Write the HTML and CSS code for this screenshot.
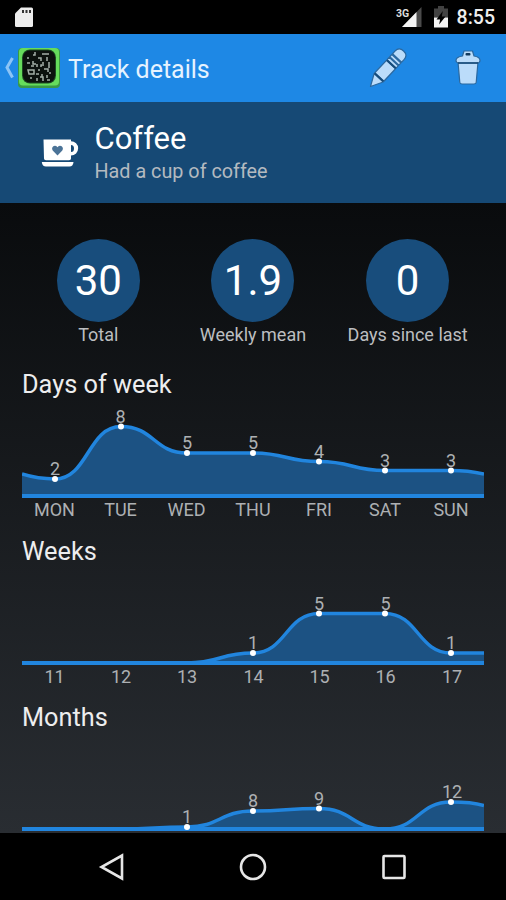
FILE: index.html
```html
<!DOCTYPE html>
<html lang="en">
<head>
  <meta charset="UTF-8" />
  <meta name="viewport" content="width=device-width, initial-scale=1" />
  <title>Track details</title>
  <link rel="stylesheet" href="styles.css">
</head>
<body>
  <div class="statusbar">
    <svg class="sdcard" width="20" height="22" viewBox="0 0 20 22">
      <path d="M7 1.500h10.500q1.500 0 1.500 1.500v16.500q0 1.500-1.500 1.500h-15q-1.500 0-1.500-1.500V7.500z" fill="#ececec"/>
      <path d="M9 4v3M12.500 4v3M16 4v3" stroke="#333" stroke-width="2"/>
    </svg>
    <svg class="signal" width="28" height="22" viewBox="0 0 28 22">
      <path d="M26.500 1v20H7z" fill="#4a4a4a"/>
      <path d="M21.500 6v15H7z" fill="#f4f4f4"/>
      <text class="network" x="1" y="10.500">3G</text>
    </svg>
    <svg class="battery" width="16" height="22" viewBox="0 0 16 22">
      <path d="M5 0h6v2.500h4V11.500H1V2.500h4z" fill="#424242"/>
      <path d="M1 11.500h14v10H1z" fill="#f4f4f4"/>
      <path d="M9.800 5L3.500 13.500h3.600l-1 5L12.500 10.500H8.800z" fill="#000"/>
    </svg>
    <span class="clock">8:55</span>
  </div>

  <div class="actionbar">
    <svg class="back" width="10" height="22" viewBox="0 0 10 22">
      <path d="M8.500 1L3 10.500 8.500 20.500" fill="none" stroke="#8cc4f6" stroke-width="3"/>
    </svg>
    <svg class="logo" width="42" height="42" viewBox="0 0 42 42">
      <rect x="0" y="1" width="42" height="40" rx="4" fill="#3a9a45"/>
      <rect x="1" y="1" width="40" height="37.500" rx="4" fill="#66dc5c"/>
      <rect x="4" y="2.500" width="34" height="34" rx="8" fill="#1c4a22"/>
      <rect x="5" y="3.500" width="32" height="32" rx="7" fill="#0c120e"/>
      <g fill="none" stroke="#a4b0a8" stroke-width="1.500">
        <path d="M17 5v3h-2M24 7h7M10 10v2M20 11h3v3M29 10v4M9 16h3M15 14v3h3M24 16h2M31 15v6"/>
        <path d="M13 19h3M19 17v3M23 20v-2h3M10 23h6v4h-5zM20 23h2M26 22h4v3M18 27h3"/>
        <path d="M24 27v3M29 28v3M19 31v3M22 30h3v4M12 31h2M29 33h3M32 25v2"/>
      </g>
    </svg>
    <h1 class="title">Track details</h1>
    <svg class="edit" width="40" height="40" viewBox="0 0 40 40">
      <g transform="translate(2.500 38.500) rotate(-47)" fill="#bbdcfa" stroke="#2b689f" stroke-width="1.200" stroke-linejoin="round">
        <path d="M0 0L12-6.200V6.200z"/>
        <path d="M13-6.200H30V6.200H13z"/>
        <path d="M31-6.200h3v12.400h-3zM35-6.200h3v12.400h-3z"/>
        <path d="M39-6.200h3.500q6 0 6 6.200t-6 6.200H39z"/>
        <path d="M12.500-6V6M30.500-6V6" stroke="#174b78" stroke-width="1.800"/>
      </g>
    </svg>
    <svg class="trash" width="28" height="38" viewBox="0 0 28 38">
      <g fill="#bbdcfa" stroke="#2b689f" stroke-width="1.200" stroke-linejoin="round">
        <path d="M4 13h20l-1.800 20.500q-.3 1.500-2.500 1.500H8.300q-2.200 0-2.500-1.500z"/>
        <path d="M8.500 7L10 2h8.500L20 7q6 1 6 4.500 0 2.500-3 2.500H5q-3 0-3-2.500Q2 8 8.500 7z"/>
      </g>
      <path d="M4 14h20" stroke="#174b78" stroke-width="1.600"/>
      <rect x="11.500" y="4" width="5" height="2.600" rx="1" fill="#123a5c"/>
    </svg>
  </div>

  <div class="track">
    <svg class="cup" width="38" height="30" viewBox="0 0 38 30">
      <path d="M2.500 1.500H30v1.700a6.500 6.500 0 0 1 0 14.300v3q0 1.700-2 1.700H5q-2 0-2-1.700z" fill="#fff"/>
      <path d="M30 7a3 3.500 0 0 1 0 7z" fill="#164975"/>
      <path d="M.8 24H32.500q-.5 4.500-4 4.500H5Q1.300 28.500.8 24z" fill="#fff"/>
      <path d="M16.500 17.500L11.700 12.500q-1.500-2.500.6-4.300 2.400-1.100 4.200 1.100 1.800-2.200 4.200-1.100 2.100 1.800.6 4.300z" fill="#4b7397"/>
    </svg>
    <div>
      <h2 class="name">Coffee</h2>
      <p class="description">Had a cup of coffee</p>
    </div>
  </div>

  <div class="content">
    <div class="stats">
      <div class="stat"><div class="circle">30</div><p>Total</p></div>
      <div class="stat"><div class="circle">1.9</div><p>Weekly mean</p></div>
      <div class="stat"><div class="circle">0</div><p>Days since last</p></div>
    </div>

    <div class="section">
      <h3>Days of week</h3>
      <svg class="chart" width="462" height="132" viewBox="0 0 462 132">
        <path class="area" d="M0 72Q16 77 33 77C66 77 66 24.500 99 24.500S132 51 165 51H231C264 51 264 59.500 297 59.500S330 68.500 363 68.500H429Q446 68.500 462 72V94H0z"/>
        <path class="line" d="M0 72Q16 77 33 77C66 77 66 24.500 99 24.500S132 51 165 51H231C264 51 264 59.500 297 59.500S330 68.500 363 68.500H429Q446 68.500 462 72"/>
        <path class="axis" d="M0 94H462"/>
        <g class="dots">
          <circle cx="33" cy="77" r="3"/><circle cx="99" cy="24.500" r="3"/><circle cx="165" cy="51" r="3"/>
          <circle cx="231" cy="51" r="3"/><circle cx="297" cy="59.500" r="3"/><circle cx="363" cy="68.500" r="3"/>
          <circle cx="429" cy="68.500" r="3"/>
        </g>
        <g class="labels">
          <text x="33" y="73">2</text><text x="98.500" y="20.500">8</text><text x="165" y="47">5</text>
          <text x="231" y="47">5</text><text x="297" y="55.500">4</text><text x="363" y="64.500">3</text>
          <text x="429" y="64.500">3</text>
          <text x="32.500" y="114">MON</text><text x="98.500" y="114">TUE</text><text x="164.500" y="114">WED</text>
          <text x="231" y="114">THU</text><text x="297" y="114">FRI</text><text x="363" y="114">SAT</text>
          <text x="429" y="114">SUN</text>
        </g>
      </svg>
    </div>

    <div class="section">
      <h3>Weeks</h3>
      <svg class="chart" width="462" height="132" viewBox="0 0 462 132">
        <path class="area" d="M0 94H165C198 94 198 84 231 84S264 44.500 297 44.500H363C396 44.500 396 84 429 84H462V94z"/>
        <path class="line" d="M0 94H165C198 94 198 84 231 84S264 44.500 297 44.500H363C396 44.500 396 84 429 84H462"/>
        <path class="axis" d="M0 94H462"/>
        <g class="dots">
          <circle cx="231" cy="84" r="3"/><circle cx="297" cy="44.500" r="3"/>
          <circle cx="363" cy="44.500" r="3"/><circle cx="429" cy="84" r="3"/>
        </g>
        <g class="labels">
          <text x="231" y="80">1</text><text x="297" y="40.500">5</text>
          <text x="363.500" y="40.500">5</text><text x="429" y="80">1</text>
          <text x="32.500" y="114">11</text><text x="99" y="114">12</text><text x="165" y="114">13</text>
          <text x="231.500" y="114">14</text><text x="297.500" y="114">15</text><text x="363.500" y="114">16</text>
          <text x="430" y="114">17</text>
        </g>
      </svg>
    </div>

    <div class="section">
      <h3>Months</h3>
      <svg class="chart" width="462" height="132" viewBox="0 0 462 132">
        <path class="area" d="M0 94H99C132 94 132 92 165 92S198 76 231 76S264 73.500 297 73.500S330 94 363 94S396 67 429 67Q450 67 462 70.500V94z"/>
        <path class="line" d="M0 94H99C132 94 132 92 165 92S198 76 231 76S264 73.500 297 73.500S330 94 363 94S396 67 429 67Q450 67 462 70.500"/>
        <path class="axis" d="M0 94H462"/>
        <g class="dots">
          <circle cx="165" cy="92" r="3"/><circle cx="231" cy="76" r="3"/>
          <circle cx="297" cy="73.500" r="3"/><circle cx="429" cy="67" r="3"/>
        </g>
        <g class="labels">
          <text x="165" y="88">1</text><text x="231" y="72">8</text>
          <text x="297" y="69.500">9</text><text x="430" y="63">12</text>
        </g>
      </svg>
    </div>
  </div>

  <div class="navbar">
    <svg width="28" height="30" viewBox="0 0 28 30"><path d="M24 3.500v23L3.500 15z"/></svg>
    <svg width="28" height="30" viewBox="0 0 28 30"><circle cx="14" cy="15" r="12"/></svg>
    <svg width="28" height="30" viewBox="0 0 28 30"><rect x="3.500" y="4" width="21" height="22" rx="1"/></svg>
  </div>
</body>
</html>
```
FILE: styles.css
```css
* {
  box-sizing: border-box;
}
body {
  margin: 0;
  height: 900px;
  display: flex;
  flex-direction: column;
  overflow: hidden;
  background: #000;
  color: #fff;
  font-family: Roboto, sans-serif;
}
h1, h2, h3, p {
  margin: 0;
  font-weight: 400;
}
svg {
  display: block;
  flex: none;
}
.statusbar {
  display: flex;
  align-items: center;
  height: 34px;
  flex: none;
  padding: 0 11px 0 14px;
}
.signal {
  margin-left: auto;
}
.network {
  font-size: 10.5px;
  font-weight: 700;
  fill: #ddd;
  stroke: #000;
  stroke-width: 2px;
  paint-order: stroke;
}
.battery {
  margin: 0 8px 0 10px;
}
.clock {
  font-size: 19.5px;
  font-weight: 500;
  line-height: 34px;
  color: #eee;
  padding-top: 2px;
}
.actionbar {
  display: flex;
  align-items: center;
  height: 68px;
  flex: none;
  padding: 0 24px 0 4px;
  background: #1e88e5;
}
.logo {
  margin-left: 4px;
}
.title {
  flex: 1;
  margin-left: 8px;
  padding-top: 3px;
  font-size: 25px;
  line-height: 30px;
  color: #e6f3ff;
}
.edit {
  margin-right: 46px;
}
.track {
  display: flex;
  align-items: center;
  height: 101px;
  flex: none;
  padding-left: 41px;
  background: #164975;
}
.name {
  padding-top: 2px;
  font-size: 31px;
  line-height: 36px;
}
.track > div {
  margin-left: 15.5px;
}
.description {
  font-size: 19.8px;
  line-height: 29px;
  color: #b4bac0;
}
.content {
  flex: none;
  height: 630px;
  overflow: hidden;
  padding: 36px 22px 0;
  background: linear-gradient(#090b0d, #292d32);
}
.stats {
  display: grid;
  grid-template-columns: repeat(3, 1fr);
  height: 129px;
  margin: 0 -1px;
}
.stat {
  text-align: center;
  font-size: 18px;
  line-height: 26px;
  color: #bcbec0;
}
.circle {
  width: 83px;
  height: 83px;
  margin: 0 auto;
  border-radius: 50%;
  background: #184d7c;
  color: #fff;
  font-size: 42px;
  line-height: 83px;
}
.section {
  height: 166.5px;
}
.section h3 {
  font-size: 25.3px;
  line-height: 34px;
  color: #ededee;
}
.area {
  fill: #1c5283;
}
.line {
  fill: none;
  stroke: #2185de;
  stroke-width: 3.5px;
}
.axis {
  stroke: #2185de;
  stroke-width: 4px;
}
.dots {
  fill: #fff;
}
.labels {
  font-size: 18px;
  fill: #adb0b3;
  text-anchor: middle;
}
.navbar {
  display: flex;
  align-items: center;
  justify-content: space-between;
  height: 67px;
  flex: none;
  padding: 0 98px;
}
.navbar svg {
  fill: none;
  stroke: #e6e6e6;
  stroke-width: 2.6px;
}
```
